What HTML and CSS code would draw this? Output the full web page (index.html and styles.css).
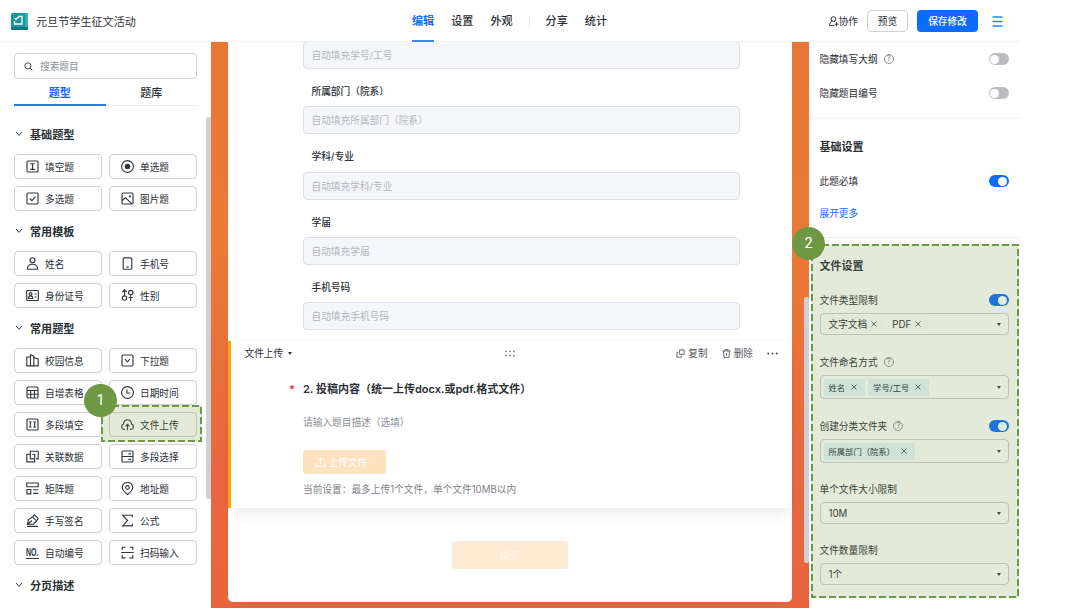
FILE: index.html
```
<!DOCTYPE html>
<html lang="zh-CN">
<head>
    <meta charset="UTF-8">
    <meta name="viewport" content="width=device-width, initial-scale=1.0">
    <title>元旦节学生征文活动</title>
    <link rel="stylesheet" href="styles.css">
</head>
<body>
<div class="app">
    <header class="header">
        <div class="brand">
            <svg class="logo" viewBox="0 0 17 17"><rect width="17" height="17" rx="1.5" fill="#16969f"/><path d="M0 14h17v1.5a1.5 1.5 0 0 1-1.5 1.5h-14A1.5 1.5 0 0 1 0 15.500z" fill="#0d7883"/><path d="M14 0h1.500a1.500 1.500 0 0 1 1.500 1.500V14h-3z" fill="#35b3b8"/><path d="M7.500 3.500H11v7.500H3.500V8M3.500 5l1.500 1.300 2.800-2.600" fill="none" stroke="#fff" stroke-width="1.300"/></svg>
            <span>元旦节学生征文活动</span>
        </div>
        <nav class="nav">
            <a class="active">编辑</a>
            <a>设置</a>
            <a>外观</a>
            <i class="nav-line"></i>
            <a>分享</a>
            <a>统计</a>
        </nav>
        <div class="actions">
            <span class="collab"><svg viewBox="0 0 10 11"><circle cx="4.500" cy="3" r="2.300"/><path d="M3 5.200C1.300 6 .6 7.400.6 9.500h4.600M5 5.300l1.200.8M7.500 6.200v4M5.500 8.200h4"/></svg>协作</span>
            <button class="btn">预览</button>
            <button class="btn btn-primary">保存修改</button>
            <svg class="menu" viewBox="0 0 11 11"><path d="M.5 1h10M.5 5.500h10M.5 10h10"/></svg>
        </div>
    </header>

    <main class="main">
        <aside class="sidebar">
            <div class="search">
                <svg viewBox="0 0 10 10"><circle cx="4.300" cy="4.300" r="3.400"/><path d="M6.800 6.800L9.300 9.300"/></svg>
                <span>搜索题目</span>
            </div>
            <div class="tabs">
                <div class="tab active">题型</div>
                <div class="tab">题库</div>
            </div>
            <div class="groups">
                <h3><svg viewBox="0 0 8 6"><path d="M1 1l3 3.400L7 1"/></svg>基础题型</h3>
                <div class="items">
                    <div class="item"><svg viewBox="0 0 13 13"><rect x="1" y="1" width="11" height="11" rx="1"/><path d="M4.200 3.700h4.600M6.500 3.700v5.600M4.200 9.300h4.600"/></svg>填空题</div>
                    <div class="item"><svg viewBox="0 0 13 13"><circle cx="6.500" cy="6.500" r="5.900"/><circle class="solid" cx="6.500" cy="6.500" r="2.200"/></svg>单选题</div>
                    <div class="item"><svg viewBox="0 0 13 13"><rect x="1" y="1" width="11" height="11" rx="1"/><path d="M3.700 6.500l2.200 2.100 3.600-3.900"/></svg>多选题</div>
                    <div class="item"><svg viewBox="0 0 13 13"><rect x="1" y="1" width="11" height="11" rx="1"/><path d="M1.200 8.500l3.200-3 6.400 6.300"/><circle class="solid" cx="9" cy="4.200" r=".5"/></svg>图片题</div>
                </div>
                <h3><svg viewBox="0 0 8 6"><path d="M1 1l3 3.400L7 1"/></svg>常用模板</h3>
                <div class="items">
                    <div class="item"><svg viewBox="0 0 13 13"><circle cx="6.500" cy="3.200" r="2.500"/><path d="M1.300 12.200c0-3 1.800-5 5.200-5s5.200 2 5.200 5z"/></svg>姓名</div>
                    <div class="item"><svg viewBox="0 0 13 13"><rect x="2.200" y=".8" width="8.600" height="11.400" rx="1"/><path d="M5.200 10h2.600"/></svg>手机号</div>
                    <div class="item"><svg viewBox="0 0 13 13"><rect x=".7" y="1.500" width="11.600" height="10" rx=".8"/><circle cx="4.600" cy="5" r="1.400"/><path d="M2.500 9.500c0-1.700.7-2.600 2.100-2.600s2.100.9 2.100 2.600zM8.500 5h2M8.500 8h2"/></svg>身份证号</div>
                    <div class="item"><svg viewBox="0 0 13 13"><circle cx="3.500" cy="9" r="2.200"/><path d="M3.500 6.800V1M1.300 3l2.200-2.200L5.700 3"/><circle cx="9.700" cy="3.500" r="2.200"/><path d="M9.700 5.700v6.300M7.500 8.500h4.400"/></svg>性别</div>
                </div>
                <h3><svg viewBox="0 0 8 6"><path d="M1 1l3 3.400L7 1"/></svg>常用题型</h3>
                <div class="items">
                    <div class="item"><svg viewBox="0 0 13 13"><path d="M4.500 11.800H.8V3h3.700M4.500 11.800V.8l3.300 1.400v9.600zM7.800 3.500l4.400 1.500v6.800H7.800"/></svg>校园信息</div>
                    <div class="item"><svg viewBox="0 0 13 13"><rect x="1" y="1" width="11" height="11" rx="1"/><path d="M4 5.200l2.500 2.600L9 5.200"/></svg>下拉题</div>
                    <div class="item"><svg viewBox="0 0 13 13"><rect x="1" y="1" width="11" height="11" rx="1"/><path d="M1 4.500h11M1 8.200h11M4.700 4.500V12M8.400 4.500V12"/></svg>自增表格</div>
                    <div class="item"><svg viewBox="0 0 13 13"><circle cx="6.500" cy="6.500" r="5.900"/><path d="M6 3.500V7h3.300"/></svg>日期时间</div>
                    <div class="item"><svg viewBox="0 0 13 13"><rect x="1" y="1" width="11" height="11" rx="1"/><path d="M3 4h2.600M4.300 4v5M3 9h2.600M7.400 4H10M8.700 4v5M7.400 9H10"/></svg>多段填空</div>
                    <div class="item upload"><svg viewBox="0 0 13 13"><path d="M4 11.300H3.300A2.700 2.700 0 0 1 2.600 6C2.600 3.300 4.300 1.700 6.500 1.700S10.400 3.300 10.400 6a2.700 2.700 0 0 1-.7 5.300H9M6.500 12.200V6.300M4.500 8.300l2-2 2 2"/></svg>文件上传
                        <div class="mark mark-upload"><svg><rect x="1" y="1" width="99" height="35"/></svg><b class="badge">1</b></div>
                    </div>
                    <div class="item"><svg viewBox="0 0 13 13"><path d="M8 8.800H4.300V1.200h7.900v7.600H10M4.300 4.200H.8v7.600h7.900V4.500H6.500M4.300 6.500v2.300"/></svg>关联数据</div>
                    <div class="item"><svg viewBox="0 0 13 13"><rect x="1" y="1" width="11" height="11" rx="1"/><path d="M1 6.500h11M7.500 3.800H10M7.500 9.300H10"/></svg>多段选择</div>
                    <div class="item"><svg viewBox="0 0 13 13"><path d="M.8 1h11.400v3.700H.8zM1 7.500h3.800v4.300H1zM7.200 7.700h5M7.200 11.400h5"/></svg>矩阵题</div>
                    <div class="item"><svg viewBox="0 0 13 13"><path d="M6.500 12.500C3 9.600 1.200 7.500 1.200 5.400a5.300 4.900 0 0 1 10.600 0c0 2.100-1.800 4.200-5.300 7.100z"/><circle cx="6.500" cy="5.400" r="1.800"/></svg>地址题</div>
                    <div class="item"><svg viewBox="0 0 13 13"><path d="M1.500 10.500L2.500 5.500l4-2.600 4 4-3 3.200zM6.500 2.900L8.300.9l3.900 3.700-1.700 2.300M1.500 10.500l4.300-4M1 12.300h11"/></svg>手写签名</div>
                    <div class="item"><svg viewBox="0 0 13 13"><path d="M11.300 3.200V1.200H1.700L6.500 6.500l-4.800 5.300h9.600V9.800"/></svg>公式</div>
                    <div class="item"><span class="no"><span>NO.</span></span>自动编号</div>
                    <div class="item"><svg viewBox="0 0 13 13"><path d="M1.200 4V1.200H4.500M8.500 1.200h3.300V4M1.200 9v2.800H4.500M8.500 11.800h3.300V9M.3 6.500h12.400"/></svg>扫码输入</div>
                </div>
                <h3><svg viewBox="0 0 8 6"><path d="M1 1l3 3.400L7 1"/></svg>分页描述</h3>
            </div>
            <div class="scrollbar"></div>
        </aside>

        <section class="canvas">
            <div class="form">
                <div class="fields">
                    <div class="input first">自动填充学号/工号</div>
                    <label>所属部门（院系）</label>
                    <div class="input">自动填充所属部门（院系）</div>
                    <label>学科/专业</label>
                    <div class="input">自动填充学科/专业</div>
                    <label>学届</label>
                    <div class="input">自动填充学届</div>
                    <label>手机号码</label>
                    <div class="input">自动填充手机号码</div>
                </div>
                <div class="card">
                    <div class="toolbar">
                        <span class="type">文件上传<i class="caret"></i></span>
                        <svg class="drag" viewBox="0 0 10 7"><circle cx="1" cy="1.300" r=".9"/><circle cx="5" cy="1.300" r=".9"/><circle cx="9" cy="1.300" r=".9"/><circle cx="1" cy="5.700" r=".9"/><circle cx="5" cy="5.700" r=".9"/><circle cx="9" cy="5.700" r=".9"/></svg>
                        <div class="tools">
                            <span><svg viewBox="0 0 10 10"><path d="M4 1h5v5H4zM2.600 3.600H1V9h5V7.500"/></svg>复制</span>
                            <span><svg viewBox="0 0 10 10"><path d="M.5 2.200h9M3.200 2V.7h3.600V2M1.700 2.400l.5 6.900h5.600l.5-6.900M5 4.500v2.700"/></svg>删除</span>
                            <svg class="more" viewBox="0 0 11 3"><circle cx="1.300" cy="1.500" r="1"/><circle cx="5.500" cy="1.500" r="1"/><circle cx="9.700" cy="1.500" r="1"/></svg>
                        </div>
                    </div>
                    <div class="question">
                        <h2><em>*</em>2. 投稿内容（统一上传docx.或pdf.格式文件）</h2>
                        <p class="desc">请输入题目描述（选填）</p>
                        <button class="upload-btn"><svg viewBox="0 0 12 11"><path d="M6 8V1M3.300 3.500L6 .9l2.700 2.600M.7 7v3.200h10.600V7"/></svg>上传文件<i class="caret"></i></button>
                        <p class="hint">当前设置：最多上传1个文件，单个文件10MB以内</p>
                    </div>
                </div>
                <div class="form-footer">
                    <button class="submit">提交</button>
                </div>
            </div>
            <div class="scrollbar"></div>
        </section>

        <aside class="panel">
            <div class="group group-top">
                <div class="row">隐藏填写大纲<i class="help">?</i><span class="switch"></span></div>
                <div class="row">隐藏题目编号<span class="switch"></span></div>
            </div>
            <div class="group">
                <h4>基础设置</h4>
                <div class="row required">此题必填<span class="switch on"></span></div>
                <a class="row expand">展开更多</a>
            </div>
            <div class="group settings">
                <h4>文件设置</h4>
                <div class="row">文件类型限制<span class="switch on"></span></div>
                <div class="select plain"><span class="chip">文字文档<svg viewBox="0 0 6 6"><path d="M.5.5l5 5M5.500.5l-5 5"/></svg></span><span class="chip">PDF<svg viewBox="0 0 6 6"><path d="M.5.5l5 5M5.500.5l-5 5"/></svg></span><i class="caret"></i></div>
                <div class="row">文件命名方式<i class="help">?</i></div>
                <div class="select tall"><span class="chip">姓名<svg viewBox="0 0 6 6"><path d="M.5.5l5 5M5.500.5l-5 5"/></svg></span><span class="chip">学号/工号<svg viewBox="0 0 6 6"><path d="M.5.5l5 5M5.500.5l-5 5"/></svg></span><i class="caret"></i></div>
                <div class="row">创建分类文件夹<i class="help">?</i><span class="switch on"></span></div>
                <div class="select tall"><span class="chip">所属部门（院系）<svg viewBox="0 0 6 6"><path d="M.5.5l5 5M5.500.5l-5 5"/></svg></span><i class="caret"></i></div>
                <div class="row short">单个文件大小限制</div>
                <div class="select value">10M<i class="caret"></i></div>
                <div class="row short">文件数量限制</div>
                <div class="select value">1个<i class="caret"></i></div>
                <div class="mark mark-settings"><svg><rect x="1" y="1" width="206" height="352"/></svg><b class="badge">2</b></div>
            </div>
        </aside>
    </main>
</div>
</body>
</html>
```
FILE: styles.css
```
/* General Styles */
* {
    box-sizing: border-box;
}

body {
    margin: 0;
    font-family: Inter, "Noto Sans CJK SC", sans-serif;
    font-size: 9.7px;
    color: #2b2f36;
    background-color: #fff;
    overflow: hidden;
}

h2, h3, h4, p {
    margin: 0;
}

button {
    font-family: inherit;
    padding: 0;
}

svg {
    display: block;
    flex: none;
    fill: none;
    stroke: #33373d;
    stroke-width: 1;
}

.app {
    width: 1020px;
    height: 608px;
    display: flex;
    flex-direction: column;
}

/* Header */
.header {
    height: 42px;
    flex: none;
    display: grid;
    grid-template-columns: 412px 1fr auto;
    align-items: center;
    padding-right: 17px;
    border-bottom: 1px solid #f0f1f3;
}

.brand {
    display: flex;
    align-items: center;
    gap: 8px;
    padding-left: 11px;
    font-size: 11.1px;
}

.logo {
    width: 17px;
    height: 17px;
    stroke: none;
}

.nav {
    height: 42px;
    display: flex;
    align-items: center;
    gap: 17px;
    font-size: 11.1px;
    font-weight: 500;
}

.nav a {
    height: 42px;
    padding-top: 1px;
    line-height: 41px;
    border-bottom: 2px solid transparent;
}

.nav .active {
    color: #1469f5;
    font-weight: 700;
    border-color: #3f86f7;
}

.nav-line {
    width: 1px;
    height: 11px;
    margin: 0 -1px 0 -1px;
    background-color: #e6e7ea;
}

.actions {
    display: flex;
    align-items: center;
}

.collab {
    display: flex;
    align-items: center;
    gap: 0;
    margin-right: 9px;
}

.collab svg {
    width: 10px;
    height: 11px;
}

.btn {
    width: 41px;
    height: 22px;
    margin-right: 9px;
    border: 1px solid #cfd1d4;
    border-radius: 4px;
    background-color: #fff;
    color: #2b2f36;
    font-size: 9.7px;
}

.btn-primary {
    width: 61px;
    margin-right: 14px;
    border: none;
    background-color: #0b6cff;
    color: #fff;
    font-weight: 500;
}

.menu {
    width: 11px;
    height: 11px;
    stroke: #2f7df6;
    stroke-width: 1.3;
}

.main {
    flex: 1;
    min-height: 0;
    display: flex;
}

/* Question types */
.sidebar {
    position: relative;
    width: 211px;
    flex: none;
    padding: 11px 14px 0;
}

.search {
    height: 26px;
    display: flex;
    align-items: center;
    gap: 7px;
    padding: 0 9px;
    border: 1px solid #cfd1d5;
    border-radius: 4px;
    color: #8c8f94;
}

.search svg {
    width: 9px;
    height: 9px;
}

.tabs {
    display: flex;
    height: 27px;
    border-bottom: 1px solid #eceef0;
}

.tab {
    flex: 1;
    height: 27px;
    line-height: 28px;
    text-align: center;
    font-size: 11px;
    font-weight: 500;
    border-bottom: 2px solid transparent;
}

.tab.active {
    color: #1469f5;
    font-weight: 700;
    border-color: #2c77ea;
}

.groups {
    padding-top: 8px;
}

.groups h3 {
    height: 40px;
    display: flex;
    align-items: center;
    gap: 7px;
    padding-left: 1px;
    font-size: 11.1px;
    font-weight: 700;
}

.groups h3 svg {
    width: 8px;
    height: 6px;
}

.items {
    display: grid;
    grid-template-columns: 88px 88px;
    gap: 7px;
    width: 183px;
}

.item {
    position: relative;
    height: 25px;
    display: flex;
    align-items: center;
    gap: 6px;
    padding-left: 11px;
    border: 1px solid #cdcfd2;
    border-radius: 4px;
    white-space: nowrap;
}

.item > svg {
    width: 13px;
    height: 13px;
    stroke-width: 1.15;
}

.item .solid {
    fill: #33373d;
}

.no {
    width: 13px;
    height: 12px;
    line-height: 11px;
    font-family: "Liberation Sans", sans-serif;
    font-size: 10px;
    font-weight: 700;
    border-bottom: 1px solid #33373d;
}

.no span {
    display: block;
    transform: scaleX(0.7);
    transform-origin: left;
}

.scrollbar {
    position: absolute;
    right: 0;
    top: 75px;
    width: 5px;
    height: 382px;
    border-radius: 2px;
    background-color: #cfd0d3;
}

/* Step highlights */
.mark {
    position: absolute;
    z-index: 5;
    background-color: rgba(112, 152, 69, 0.2);
}

.mark svg {
    width: 100%;
    height: 100%;
    stroke: #6f9845;
    stroke-width: 2;
    stroke-dasharray: 7 3;
}

.badge {
    position: absolute;
    width: 33px;
    height: 33px;
    line-height: 34px;
    border-radius: 50%;
    background-color: #6f9845;
    color: #fff;
    font-family: Roboto, sans-serif;
    font-size: 14.5px;
    font-weight: 400;
    text-align: center;
}

.mark-upload {
    left: -9px;
    top: -8px;
    width: 101px;
    height: 37px;
}

.mark-upload .badge {
    left: -17px;
    top: -21px;
}

.mark-settings {
    left: 2.5px;
    top: 6px;
    width: 208px;
    height: 354px;
}

.mark-settings .badge {
    left: -19px;
    top: -17px;
}

/* Form */
.canvas {
    position: relative;
    width: 597.5px;
    flex: none;
    padding: 0 16.5px 0 16.5px;
    background: linear-gradient(#e97637, #ea7a34 35%, #e96840 75%, #e8633c);
}

.canvas .scrollbar {
    top: 255px;
    width: 5px;
    height: 266px;
}

.form {
    height: 560px;
    background-color: #fff;
    border-radius: 0 0 5px 5px;
}

.fields {
    height: 299px;
    padding: 0 52.5px 0 75px;
    overflow: hidden;
}

.input {
    height: 28px;
    line-height: 27px;
    padding-left: 8px;
    border: 1px solid #dcdfe5;
    border-radius: 4px;
    background-color: #f5f6fa;
    color: #b4b7bd;
}

.input.first {
    margin-top: -1px;
}

.fields label {
    display: block;
    height: 37.3px;
    padding-top: 8px;
    line-height: 30px;
    padding-left: 9px;
    font-weight: 500;
}

.card {
    position: relative;
    height: 167px;
    border-left: 3px solid #f5a60c;
    background-color: #fff;
    box-shadow: 0 10px 14px -4px rgba(0, 0, 0, 0.08), 0 -1px 3px rgba(0, 0, 0, 0.03);
}

.toolbar {
    height: 24px;
    display: grid;
    grid-template-columns: 1fr 10px 1fr;
    align-items: center;
    padding: 0 14px 0 14px;
}

.type {
    display: flex;
    align-items: center;
    gap: 5px;
}

.caret {
    border: 2px solid transparent;
    border-top: 3px solid #33373d;
    border-bottom: 0;
}

.drag {
    width: 10px;
    height: 7px;
    margin-left: -1px;
    fill: #777a80;
    stroke: none;
}

.tools {
    display: flex;
    align-items: center;
    justify-content: flex-end;
    gap: 14px;
    color: #55585e;
}

.tools span {
    display: flex;
    align-items: center;
    gap: 3px;
}

.tools span svg {
    width: 9px;
    height: 9px;
    stroke: #55585e;
}

.tools .more {
    width: 11px;
    height: 3px;
    fill: #44474d;
    stroke: none;
}

.question {
    padding-left: 72.5px;
}

.question h2 {
    margin: 14px 0 0 -14px;
    line-height: 20px;
    font-size: 11px;
    font-weight: 600;
}

.question em {
    display: inline-block;
    width: 14px;
    color: #f0303c;
    font-style: normal;
}

.desc {
    margin-top: 14px;
    line-height: 20px;
    color: #8b8e94;
}

.upload-btn {
    display: flex;
    align-items: center;
    gap: 3px;
    width: 83px;
    height: 24px;
    margin-top: 17px;
    margin-left: -0.5px;
    padding-left: 12px;
    border: none;
    border-radius: 3px;
    background-color: #fde3c0;
    color: #fff;
    font-size: 9.7px;
}

.upload-btn svg {
    width: 11px;
    height: 10px;
    stroke: #fff;
}

.upload-btn .caret {
    margin-left: 3px;
    border-width: 2px 1.5px 0;
    border-top-color: #fff3e2;
}

.hint {
    margin-top: 6px;
    line-height: 20px;
    color: #7f8288;
}

.form-footer {
    padding-top: 33px;
    text-align: center;
}

.submit {
    width: 116px;
    height: 28px;
    border: none;
    border-radius: 3px;
    background-color: #fdebd3;
    color: #fff6e9;
    font-size: 9.7px;
}

/* Settings panel */
.panel {
    width: 211.5px;
    flex: none;
}

.group {
    padding: 0 11.5px 0 11px;
    border-bottom: 1px solid #eff0f2;
}

.group-top {
    height: 77px;
}

.group-top .row {
    height: 34px;
}

.row {
    display: flex;
    align-items: center;
}

.group h4 {
    padding-top: 18px;
    line-height: 20px;
    font-size: 11px;
    font-weight: 600;
}

.required {
    height: 32px;
    margin-top: 8px;
}

.expand {
    height: 32px;
    margin-bottom: 8px;
    color: #1469f5;
}

.help {
    width: 10px;
    height: 10px;
    margin-left: 6px;
    border: 1px solid #8b8e93;
    border-radius: 50%;
    color: #777a80;
    font-size: 7.5px;
    line-height: 8px;
    font-style: normal;
    text-align: center;
}

.switch {
    width: 20px;
    height: 12px;
    margin-left: auto;
    padding: 1.5px;
    border-radius: 6px;
    background-color: #bbbdc1;
}

.switch::after {
    content: "";
    display: block;
    width: 9px;
    height: 9px;
    border-radius: 50%;
    background-color: #fff;
}

.switch.on {
    background-color: #0b6cff;
}

.switch.on::after {
    margin-left: auto;
}

.settings {
    position: relative;
    height: 368px;
    border-bottom: none;
}

.settings .row {
    height: 20px;
    margin: 17px 0 3px;
}

.settings h4 + .row {
    margin-top: 14px;
}

.settings .row.short {
    margin-top: 16px;
}

.select {
    height: 22px;
    display: flex;
    align-items: center;
    gap: 3px;
    padding: 0 7px 0 3px;
    border: 1px solid #cdcfd2;
    border-radius: 4px;
}

.select.tall {
    height: 24px;
}

.select.value {
    padding-left: 8px;
}

.select .caret {
    margin-left: auto;
}

.chip {
    height: 17px;
    display: flex;
    align-items: center;
    gap: 6px;
    padding: 0 8px 0 5px;
    background-color: #e6f5fb;
    font-size: 8.3px;
    white-space: nowrap;
}

.chip svg {
    width: 6px;
    height: 6px;
    stroke-width: 0.8;
}

.plain .chip {
    gap: 4px;
    padding-right: 7px;
    background-color: #fdfdfd;
    font-size: 9.7px;
}

.plain .chip + .chip {
    margin-left: 0;
}
```
